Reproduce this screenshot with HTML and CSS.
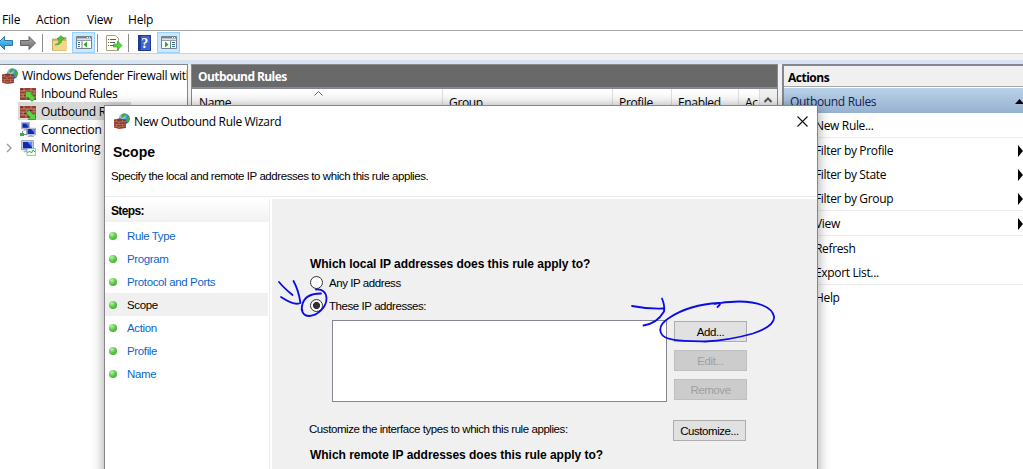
FILE: index.html
```
<!DOCTYPE html>
<html lang="en">
<head>
<meta charset="utf-8">
<title>Windows Defender Firewall with Advanced Security</title>
<link rel="stylesheet" href="styles.css">
</head>
<body>
<svg class="defs" width="0" height="0">
  <defs>
    <linearGradient id="blue" x1="0" y1="0" x2="0" y2="1"><stop offset="0" stop-color="#79d4f7"/><stop offset="1" stop-color="#118bd0"/></linearGradient>
    <linearGradient id="gray" x1="0" y1="0" x2="0" y2="1"><stop offset="0" stop-color="#aaa"/><stop offset="1" stop-color="#717171"/></linearGradient>
    <radialGradient id="earth" cx=".35" cy=".3" r=".8"><stop offset="0" stop-color="#c5efff"/><stop offset=".5" stop-color="#3d93da"/><stop offset="1" stop-color="#1b4d9c"/></radialGradient>
    <symbol id="bricks" viewBox="0 0 16 12">
      <path fill="#963f2d" d="M0 0h16v12H0z"/>
      <path fill="none" stroke="#d3a596" stroke-width=".7" d="M0 3h16M0 6h16M0 9h16M4 0v3M11 0v3M7 3v3M14 3v3M3 6v3M10 6v3M6 9v3M13 9v3"/>
      <path fill="#6e251a" d="M1 1h2v1H1zM8 4h4v1H8zM4 7h4v1H4zM8 10h4v1H8z"/>
    </symbol>
    <symbol id="firewall" viewBox="0 0 16 16">
      <circle cx="10.400" cy="5.600" r="5.400" fill="url(#earth)"/>
      <path fill="#48a936" d="M8 1q3-1 4 .5L10.500 3.500 8.500 5 7 3.500zM12.500 4l2.500-.5.8 2.500-1.800 4-1.500-2z"/>
      <path fill="#8e3a2a" d="M0 6.500l5-1 7 1v8.500L5 16l-5-1.500z"/>
      <path fill="none" stroke="#c98c7b" stroke-width=".6" d="M0 8.500l5 .6 7-.6M0 11l5 .8 7-.8M0 13.200l5 .8 7-.8M5 9.100v2.700M2.500 6.500v2.300M8.500 6.500V9M8.500 11.400V13.600M2.500 11.400v2.200M5 14v2"/>
    </symbol>
    <symbol id="inbound" viewBox="0 0 16 16"><use href="#bricks" y="2" width="16" height="12"/><path fill="#62d044" stroke="#23851c" stroke-width=".7" d="M5.500 5.500h7.500l-2 2 4.500 4.500-3.500 3.500L7.500 11l-2 2z"/></symbol>
    <symbol id="outbound" viewBox="0 0 16 16"><use href="#bricks" y="2" width="16" height="12"/><path fill="#62d044" stroke="#23851c" stroke-width=".7" d="M15.500 15.500H8l2-2L6 9l3-3 4.500 4.500 2-2z"/></symbol>
    <symbol id="screen" viewBox="0 0 10 10"><path fill="#d6dbe3" stroke="#79859b" stroke-width=".6" d="M.5.5h9v7h-9z"/><path fill="#1029b5" d="M1.500 1.500h7v5h-7z"/><path fill="#6685ef" d="M5 1.500h3.500v4z"/><path fill="#a9b2c0" d="M3.500 7.500h3v1H8v1H2v-1h1.500z"/></symbol>
    <symbol id="connect" viewBox="0 0 16 16"><use href="#screen" width="9" height="9" x="1"/><use href="#screen" width="10" height="10" x="6" y="5.500"/><path fill="none" stroke="#7d8aa0" d="M2.500 9v3"/><path fill="#26bd2b" d="M0 11h4v3H0z"/><path fill="none" stroke="#7d8aa0" d="M4 12.500h3"/></symbol>
    <symbol id="monitor" viewBox="0 0 16 16"><use href="#screen" width="13" height="13" x="1" y="0"/><path fill="#f3fbff" stroke="#6da6c0" stroke-width=".7" d="M7 8.500h8.500v7H7z"/><path fill="none" stroke="#38a938" d="M7.500 13l2-2 2 2 1.500-3 2 2"/></symbol>
    <symbol id="pane" viewBox="0 0 16 13"><path fill="#fff" stroke="#748291" d="M.5.5h15v12H.5z"/><path fill="#748291" d="M1 1h14v1.500H1zM1 3.700h14v1H1z"/><path fill="#fff" d="M11 1h1v1h-1zM13 1h1v1h-1z"/></symbol>
  </defs>
</svg>

<div class="console">
  <nav class="menu"><span class="m-file">File</span><span class="m-action">Action</span><span class="m-view">View</span><span>Help</span></nav>
  <div class="toolbar">
    <svg class="back" width="13" height="16" viewBox="3 0 13 16"><path fill="url(#blue)" stroke="#2c78a8" d="M1 8l6.500-6.500v4h8v5h-8v4z"/></svg>
    <svg class="forward" width="16" height="16"><path fill="url(#gray)" stroke="#646464" d="M15.500 8L9 1.500v4H.5v5H9v4z"/></svg>
    <i class="sep"></i>
    <svg class="folder" width="16" height="16"><path fill="#d7b660" stroke="#b08c37" stroke-width=".6" d="M.5 4h5l1.500-1.500h7V15.500H.5z"/><path fill="#f2d78b" d="M1 6h14v9.500H1z"/><path fill="#4fc632" stroke="#278420" stroke-width=".5" d="M3 10q5-2 4-6H5l4-3.500L12.500 4H10q0 6-7 6z"/></svg>
    <span class="toggle first"><svg width="16" height="13"><use href="#pane"/><path fill="none" stroke="#748291" d="M6 5v8"/><path fill="#35699b" d="M2 6h2v1H2zM2 8h2v1H2zM2 10h2v1H2z"/><path fill="#2aa928" d="M11 5.500v6L7.500 8.500z"/></svg></span>
    <i class="sep near"></i>
    <svg class="export" width="17" height="16"><path fill="#fffef0" stroke="#a6a282" d="M.5.5h9l3 3v12H.5z"/><path fill="none" stroke="#555c78" d="M4 4.500h6M4 7.500h5M4 10.500h5"/><path fill="#555c78" d="M2 4h1v1H2zM2 7h1v1H2zM2 10h1v1H2z"/><path fill="#55d43d" stroke="#25941f" stroke-width=".6" d="M7.500 9h4V6l4.500 4.500-4.500 4.500v-3h-4z"/></svg>
    <i class="sep third"></i>
    <span class="help-icon">?</span>
    <span class="toggle last"><svg width="16" height="13"><use href="#pane"/><path fill="none" stroke="#748291" d="M9.500 5v8"/><path fill="#35699b" d="M11 6h3v1h-3zM11 8h3v1h-3zM11 10h3v1h-3z"/><path fill="#2aa928" d="M4 5.500v6L7.500 8.500z"/></svg></span>
  </div>
  <div class="band"></div>
  <main class="panes">
    <section class="tree">
      <div class="node root"><svg><use href="#firewall"/></svg><span>Windows Defender Firewall with</span></div>
      <div class="node"><svg><use href="#inbound"/></svg><span>Inbound Rules</span></div>
      <div class="node selected"><svg><use href="#outbound"/></svg><span>Outbound Rules</span></div>
      <div class="node"><svg><use href="#connect"/></svg><span>Connection Security</span></div>
      <div class="node expandable"><svg class="twist" viewBox="0 0 6 10"><path fill="none" stroke="#a0a0a0" stroke-width="1.500" d="M1 1l4 4-4 4"/></svg><svg><use href="#monitor"/></svg><span>Monitoring</span></div>
    </section>
    <section class="rules">
      <h2>Outbound Rules</h2>
      <div class="grid-head">
        <span class="sorted">Name<svg width="9" height="5"><path fill="none" stroke="#666" d="M.5 4.500l4-4 4 4"/></svg></span><span>Group</span><span>Profile</span><span>Enabled</span><span>Ac</span>
        <b><svg width="8" height="6"><path fill="none" stroke="#555" stroke-width="2" d="M.5 5L4 1.500 7.500 5"/></svg></b>
      </div>
    </section>
    <aside class="actions">
      <h2>Actions</h2>
      <div class="group"><span>Outbound Rules</span><svg width="9" height="5"><path d="M0 5l4.500-5L9 5z"/></svg></div>
      <ul>
        <li class="end">New Rule...</li>
        <li class="more">Filter by Profile</li>
        <li class="more">Filter by State</li>
        <li class="more end">Filter by Group</li>
        <li class="more end">View</li>
        <li>Refresh</li>
        <li class="end">Export List...</li>
        <li>Help</li>
      </ul>
    </aside>
  </main>
</div>

<div class="dialog">
  <header class="title"><svg width="16" height="16"><use href="#firewall"/></svg><span>New Outbound Rule Wizard</span><svg class="close" width="11" height="11"><path fill="none" stroke="#111" stroke-width="1.100" d="M.5.5l10 10M10.500.5l-10 10"/></svg></header>
  <h1>Scope</h1>
  <p class="intro">Specify the local and remote IP addresses to which this rule applies.</p>
  <div class="wizard">
    <nav class="steps">
      <h3>Steps:</h3>
      <ol>
        <li><i></i>Rule Type</li>
        <li><i></i>Program</li>
        <li><i></i>Protocol and Ports</li>
        <li class="current"><i></i>Scope</li>
        <li><i></i>Action</li>
        <li><i></i>Profile</li>
        <li><i></i>Name</li>
      </ol>
    </nav>
    <section class="page">
      <h4 class="q-local">Which local IP addresses does this rule apply to?</h4>
      <div class="option"><i class="radio"></i><span>Any IP address</span></div>
      <div class="option"><i class="radio on"></i><span>These IP addresses:</span></div>
      <div class="address">
        <div class="listbox"></div>
        <div class="buttons"><span class="btn">Add...</span><span class="btn off">Edit...</span><span class="btn off">Remove</span></div>
      </div>
      <div class="custom"><span class="custom-text">Customize the interface types to which this rule applies:</span><span class="btn">Customize...</span></div>
      <h4 class="q-remote">Which remote IP addresses does this rule apply to?</h4>
    </section>
  </div>
</div>

<svg class="ink" width="1023" height="469">
  <path d="M279 282q5 6 13.500 13M293.500 281q5 9 7 22q-6 3-19.500-6"/>
  <path d="M316 289.500c6-1 10.500 3 10.500 9c0 9-9 17-17 17.500c-7 0-9-6-7-12c2-7 9-10.500 18.500-10.500"/>
  <path d="M632 306q16 3 31 2.500M662 298.500q3 7 2 13q-7 12-20.500 14"/>
  <path d="M719 303c-22 1-38 7-50 15c-8 5-10 10-8 15c3 8 20 8 44 8.500c22-1 34-4 48-8c15-5 22-10 21-17c-2-10-17-15-35-15c-9 0-15 1-23 2M715 304q6-2 5 0q0 1-2.500 3"/>
</svg>
</body>
</html>
```
FILE: styles.css
```
* { box-sizing: border-box; }
body { margin: 0; width: 1023px; height: 469px; overflow: hidden; background: #fff; color: #000; font: 12px/18px "Open Sans", "Noto Sans", sans-serif; position: relative; }
h1, h2, h3, h4, p, ul, ol { margin: 0; padding: 0; }
ul, ol { list-style: none; }
svg { flex: none; display: block; }
.defs, .ink { position: absolute; left: 0; top: 0; }
.console { display: flex; flex-direction: column; height: 469px; letter-spacing: -.34px; }

.menu { display: flex; height: 32px; padding: 11px 0 0 2px; border-bottom: 1px solid #a5a5a5; letter-spacing: -.2px; }
.m-file { width: 34px; }
.m-action { width: 51px; }
.m-view { width: 41px; }
.toolbar { display: flex; align-items: center; height: 23px; padding-top: 1px; border-bottom: 1px solid #d2d2d2; }
.forward { margin-left: 7px; }
.sep { width: 1px; height: 18px; margin-left: 6px; background: #8d8d8d; }
.folder { margin-left: 9px; }
.toggle { display: flex; align-items: center; justify-content: center; width: 23px; height: 21px; background: #cce8ff; border: 1px solid #99d1ff; }
.first { margin-left: 4px; }
.near { margin-left: 2px; }
.export { margin-left: 8px; }
.third { margin-left: 5px; }
.help-icon { width: 13px; height: 16px; margin-left: 9px; border: 1px solid #203b91; background: linear-gradient(90deg, #1e3c9c 2px, #3e65ce 2px); color: #fff; font: bold 14px/15px "Liberation Serif", serif; text-align: center; }
.last { margin-left: 6px; }
.band { height: 10px; background: #f0f0f0; border-bottom: 4px solid #d6e3f2; }

.panes { display: flex; flex: 1; background: #f0f0f0; }
.tree { width: 188px; padding-top: 1px; margin-right: 3px; background: #fff; border: solid #828790; border-width: 1px 1px 0 0; overflow: hidden; }
.node { display: flex; align-items: center; height: 18px; margin-left: 18px; padding: 2px 0 0 2px; white-space: nowrap; }
.node svg { width: 16px; height: 16px; margin-right: 5px; }
.root { margin-left: 0; }
.root svg { margin-right: 4px; }
.root span { letter-spacing: -.3px; }
.selected { width: 113px; background: #d9d9d9; }
.expandable { margin-left: 0; padding-left: 6px; }
.expandable span { letter-spacing: -.25px; }
.node .twist { width: 6px; height: 10px; margin-right: 8px; }

.rules { width: 587px; margin-right: 4px; }
.rules h2 { height: 24px; padding: 3px 6px 0; border: 1px solid #8b8b8b; background: #696969; color: #fff; font-size: 12px; line-height: 18px; letter-spacing: -.58px; }
.grid-head { display: grid; grid-template-columns: 251px 170px 59px 67px 21px 17px; height: 381px; border: 1px solid #828790; background: linear-gradient(#fff, #f3f3f3 20px, #fff 21px); }
.grid-head span { height: 24px; padding: 5px 0 0 6px; border-right: 1px solid #dedede; overflow: hidden; }
.grid-head .sorted { display: flex; padding-left: 7px; }
.sorted svg { margin: -3px 0 0 83px; }
.grid-head b { height: 24px; padding: 8px 0 0 4px; background: #f0f0f0; }

.actions { flex: 1; border: solid #828790; border-width: 2px 0 0 2px; background: #fff; }
.actions h2 { height: 21px; padding: 3px 0 0 4px; border-bottom: 1px solid #a6a6a6; background: #f0f0f0; font-size: 12px; line-height: 17px; letter-spacing: -.5px; }
.group { display: flex; align-items: center; justify-content: space-between; height: 25px; margin-top: 1px; padding: 2px 0 0 6px; background: linear-gradient(#bad1e8, #96b2d1); color: #151c55; }
.group svg { fill: #000; margin-right: -1px; }
.actions li { height: 24px; padding: 4px 0 0 31px; color: #000; }
.actions .end { height: 25px; border-bottom: 1px solid #ececec; }
.more::after { content: ""; float: right; margin-top: 3px; border: solid transparent; border-width: 6px 0 6px 5px; border-left-color: #000; }

.dialog { position: absolute; left: 104px; top: 105px; width: 714px; height: 374px; border: 1px solid #85858a; background: #fff; box-shadow: 0 2px 12px rgba(0, 0, 0, .38); font: 11.5px/16px "Liberation Sans", Arial, sans-serif; letter-spacing: -.43px; white-space: nowrap; }
.title { display: flex; align-items: center; height: 30px; padding: 0 9px 0 9px; font: 12px/18px "Open Sans", sans-serif; letter-spacing: -.33px; }
.title span { margin-left: 4px; padding-top: 1px; }
.close { margin-left: auto; }
.dialog h1 { height: 32px; padding: 7px 0 0 8px; font-size: 14px; line-height: 18px; letter-spacing: 0; }
.intro { height: 28px; padding-left: 6px; }
.wizard { display: flex; height: 282px; border-top: 1px solid #ececec; padding-top: 2px; }
.steps { width: 165px; margin-right: 2px; border-right: 1px solid #ececec; }
.steps h3 { height: 23px; padding: 4px 0 0 6px; background: linear-gradient(#fff, #f1f1f1); font-size: 12px; line-height: 16px; letter-spacing: -.65px; }
.steps ol { padding-top: 2px; }
.steps li { display: flex; align-items: center; height: 23px; padding-left: 4px; color: #0b66cc; letter-spacing: -.36px; }
.steps li i { width: 8px; height: 8px; margin: 1px 10px 0 0; border-radius: 50%; background: radial-gradient(circle at 35% 28%, #c1edb3, #58c943 48%, #30a326); }
.steps .current { width: 163px; background: #f0f0f0; color: #000; }
.page { flex: 1; padding: 57px 0 0 38px; background: #f0f0f0; }
.page h4 { font-size: 12px; line-height: 16px; letter-spacing: -.03px; }
.q-local { height: 15px; }
.option { display: flex; align-items: center; height: 23px; }
.radio { width: 13px; height: 13px; margin-right: 6px; border: 1px solid #333; border-radius: 50%; background: #fff; }
.radio.on { background: radial-gradient(circle, #333 3.200px, #fff 3.900px); }
.address { display: flex; height: 103px; padding: 3px 0 0 22px; }
.listbox { width: 335px; height: 82px; background: #fff; border: 1px solid #828790; }
.buttons { display: flex; flex-direction: column; gap: 8px; margin: 1px 0 0 7px; }
.btn { width: 73px; height: 21px; border: 1px solid #adadad; background: #e1e1e1; text-align: center; line-height: 20px; }
.btn.off { background: #ccc; border-color: #bfbfbf; color: #a0a0a0; }
.custom { display: flex; height: 27px; }
.custom-text { width: 363px; padding-top: 1px; margin-left: -1px; margin-right: 1px; }
.ink { fill: none; stroke: #0b0be6; stroke-width: 1.800; stroke-linecap: round; stroke-linejoin: round; }
```
